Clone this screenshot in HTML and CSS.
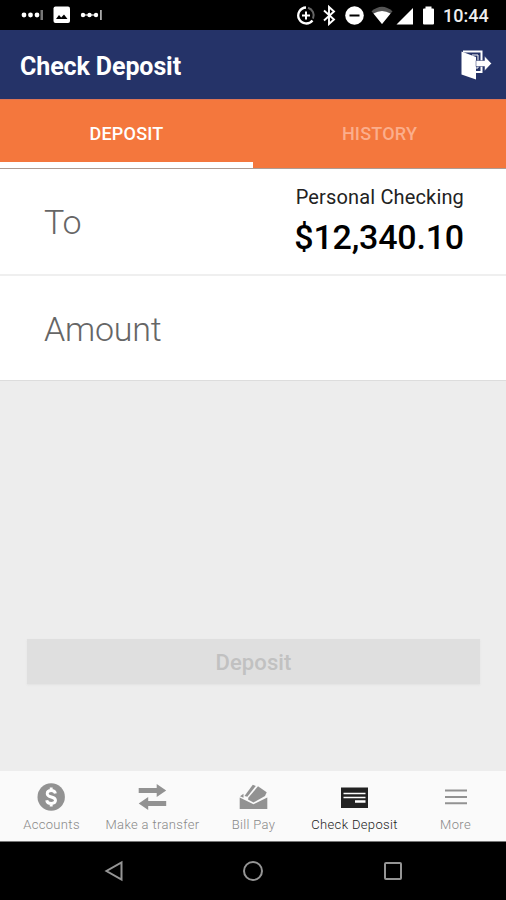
FILE: index.html
```html
<!DOCTYPE html>
<html lang="en">
<head>
<meta charset="utf-8">
<title>Check Deposit</title>
<link rel="stylesheet" href="styles.css">
</head>
<body>
<div class="screen">
  <div class="status">
    <div class="status-left">
      <svg width="24" height="10" viewBox="0 0 24 10" fill="#fff"><circle cx="3" cy="5" r="2.4"/><circle cx="9.500" cy="5" r="2.400"/><circle cx="16" cy="5" r="2.400"/><rect x="19.500" width="2.500" height="10" fill="#777"/></svg>
      <svg class="photo" width="18" height="18" viewBox="0 0 18 18"><rect x=".5" y=".5" width="16.500" height="16.500" rx="2" fill="#fff"/><path d="M3 13l3-4 2.200 2.500L11 8.500l3.500 4.500z" fill="#000"/></svg>
      <svg width="24" height="12" viewBox="0 0 24 12" fill="#fff"><path d="M2 5h15v2H2z" opacity=".55"/><circle cx="3" cy="6" r="2.200"/><circle cx="9.500" cy="6" r="2.200"/><circle cx="16" cy="6" r="2.200"/><rect x="20" y="1" width="1.800" height="10" fill="#aaa"/></svg>
    </div>
    <div class="status-right">
      <svg width="139" height="22" viewBox="296 4 139 22" class="sys" fill="none" stroke="#fff">
        <path d="M306 7.500a8 8 0 1 0 6.500 13" stroke-width="2.300"/><path d="M308 7.700a8 8 0 0 1 5 11" stroke="#666" stroke-width="2"/><path d="M306 11.500v8M302 15.500h8" stroke-width="2"/>
        <path d="M324 10.500l10 9-5 4.500V7l5 4.500-10 9" stroke-width="1.900"/>
        <circle cx="354.500" cy="15.500" r="9.300" fill="#fff" stroke="none"/><path d="M349.500 15.500h10" stroke="#000" stroke-width="2"/>
        <path d="M371.500 11.200q10.500-9 21 0L382 24z" fill="#555" stroke="none"/><path d="M373.500 13.500q8.500-5 17 0L382 24z" fill="#fff" stroke="none"/>
        <path d="M396.500 24.500L413 8v16.500z" fill="#fff" stroke="none"/>
        <path d="M424 8.500h1.500V6.500h6v2h1.500q1 0 1 1V23.500q0 1-1 1h-9q-1 0-1-1V9.500q0-1 1-1z" fill="#fff" stroke="none"/>
      </svg>
      <span class="clock">10:44</span>
    </div>
  </div>
  <header class="header">
    <h1>Check Deposit</h1>
    <svg width="32" height="32" viewBox="0 0 32 32"><path d="M3 2.500h18.500v20.500H16" fill="none" stroke="#fff" stroke-width="2"/><path d="M12 6h6v13h-2" fill="none" stroke="#fff" stroke-width="1"/><path d="M1.500 2.500L16 8v22.500L1.500 25.500z" fill="#fff"/><path d="M16 11.500h8.500V7l7 7.500-7 7.500v-4.500H16z" fill="#fff" stroke="#253368" stroke-width=".5"/></svg>
  </header>
  <nav class="tabs"><div class="tab active">DEPOSIT</div><div class="tab">HISTORY</div></nav>
  <section class="row to-row">
    <span class="label">To</span>
    <div class="account"><div class="name">Personal Checking</div><div class="balance">$12,340.10</div></div>
  </section>
  <section class="row amount-row"><span class="label">Amount</span></section>
  <main class="body"><button class="deposit" disabled>Deposit</button></main>
  <nav class="bottom">
    <div class="item">
      <svg width="30" height="30" viewBox="0 0 30 30"><circle cx="14.200" cy="15" r="13.700" fill="#929292"/><path transform="translate(-.8)" d="M19.200 11.500c-.4-2-2-3-4.200-3s-4 1.100-4 3.200c0 4.400 8.300 2.200 8.300 6.600 0 2-1.800 3.200-4.300 3.200-2.400 0-4.200-1.200-4.500-3.300M15 5.500v3M15 21.500v3" fill="none" stroke="#fff" stroke-width="2.900"/></svg>
      <span>Accounts</span></div>
    <div class="item">
      <svg width="30" height="30" viewBox="0 0 30 30" fill="#929292"><path transform="translate(-.8)" d="M1.500 6h18V2l9.500 6.500-9.500 6.500v-4h-18zM29 19H11v-4l-9.500 6.500L11 28v-4h18z"/></svg>
      <span>Make a transfer</span></div>
    <div class="item">
      <svg width="30" height="30" viewBox="0 0 30 30" fill="#929292"><path d="M.7 15.500L14.500 22.300l13.800-6.800V27H.7z"/><path d="M5.500 14L13.800 2.800l3 1.200-8.500 10.800z"/><path d="M9.500 15.500L19 4.300l8.700 5.900-1.700 3.800-11.500 6.500-5.500-3z"/><path d="M1 14.200l3.500-2.500v4z"/></svg>
      <span>Bill Pay</span></div>
    <div class="item selected">
      <svg width="30" height="30" viewBox="0 0 30 30"><rect x="1" y="5.500" width="27" height="20.500" fill="#222"/><path d="M3.500 11.500h22M3.500 15.500h22" stroke="#fff" stroke-width="1.700"/><path d="M15 19.500H25.500" stroke="#fff" stroke-width="2.500"/></svg>
      <span>Check Deposit</span></div>
    <div class="item">
      <svg width="30" height="30" viewBox="0 0 30 30"><path d="M4 8.500h22M4 15h22M4 21.300h22" stroke="#929292" stroke-width="2"/></svg>
      <span>More</span></div>
  </nav>
  <footer class="system">
    <svg width="22" height="22" viewBox="0 0 22 22"><path d="M18.500 2.500v17L3.500 11z"/></svg>
    <svg width="22" height="22" viewBox="0 0 22 22"><circle cx="11" cy="11" r="9"/></svg>
    <svg width="22" height="22" viewBox="0 0 22 22"><rect x="3" y="3" width="16" height="16" rx="1"/></svg>
  </footer>
</div>
</body>
</html>
```
FILE: styles.css
```css
* { box-sizing: border-box; }
body { margin: 0; font-family: Roboto, "Liberation Sans", sans-serif; }
svg { display: block; flex: none; }
.screen { width: 506px; height: 900px; display: flex; flex-direction: column; overflow: hidden; background: #ededed; }
.status { height: 30px; flex: none; background: #000; display: flex; justify-content: space-between; padding: 0 19px 0 21px; }
.status-left, .status-right { display: flex; align-items: center; }
.photo { margin: 0 9px 0 8px; }
.sys { margin-right: 8px; }
.clock { color: #eee; font-size: 18px; line-height: 30px; font-weight: 500; width: 44px; white-space: nowrap; padding-top: 2px; }
.header { height: 69px; flex: none; background: #253368; display: flex; align-items: center; justify-content: space-between; padding: 0 14px 0 20px; }
h1 { margin: 3px 0 0; color: #fff; font-size: 25px; font-weight: 700; letter-spacing: -.1px; white-space: nowrap; }
.tabs { height: 70px; flex: none; display: flex; background: #f4773d; border-top: 1px solid #dc7455; border-bottom: 1px solid #ad9c94; }
.tab { width: 50%; display: flex; align-items: center; justify-content: center; padding-top: 5px; color: #fbae8c; font-size: 18px; font-weight: 500; letter-spacing: .2px; border-bottom: 6px solid transparent; }
.tab.active { color: #fff; border-color: #fff; }
.row { flex: none; background: #fff; display: flex; align-items: center; justify-content: space-between; padding: 0 42px 0 44px; border-bottom: 2px solid #efefef; }
.to-row { height: 107px; }
.amount-row { height: 105px; border-bottom: 1px solid #ddd; padding-top: 2px; }
.label { font-size: 34px; font-weight: 300; color: #666; letter-spacing: -.2px; }
.account { text-align: right; align-self: flex-start; padding-top: 16px; white-space: nowrap; }
.name { color: #222; font-size: 20px; line-height: 24px; letter-spacing: .15px; }
.balance { color: #000; font-size: 34px; line-height: 41px; font-weight: 500; margin-top: 8px; letter-spacing: -.2px; }
.body { flex: 1; padding: 258px 26px 0 27px; }
.deposit { display: block; width: 100%; height: 45px; border: 0; background: #dfdfdf; color: #c1c1c1; font: 500 22px Roboto, sans-serif; letter-spacing: .1px; padding: 1px 0 0; box-shadow: 0 1px 2px #e2e2e2; }
.bottom { height: 71px; flex: none; background: #fafafa; display: grid; grid-template-columns: repeat(5, 1fr); border-bottom: 1px solid #777; padding-left: 1px; }
.item { display: flex; flex-direction: column; align-items: center; padding-top: 11px; color: #888; font-size: 13px; font-weight: 300; letter-spacing: .35px; line-height: 18px; white-space: nowrap; }
.item span { margin-top: 4px; }
.selected { color: #222; }
.system { height: 58px; flex: none; background: #000; display: flex; align-items: center; justify-content: center; gap: 117.500px; }
.system svg { fill: none; stroke: #959595; stroke-width: 2; }
```
